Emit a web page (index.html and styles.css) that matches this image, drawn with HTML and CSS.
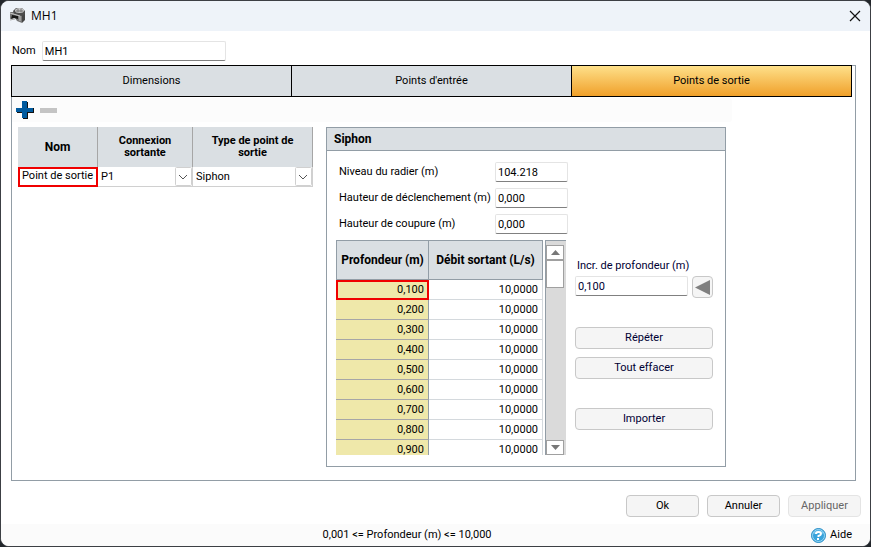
FILE: index.html
```html
<!DOCTYPE html>
<html lang="fr">

<head>
  <meta charset="UTF-8">
  <meta name="viewport" content="width=device-width, initial-scale=1.0">
  <title>MH1</title>
  <link rel="stylesheet" href="styles.css">
</head>

<body>
  <div class="window">
    <header class="titlebar">
      <svg class="app-icon" width="18" height="18" viewBox="0 0 18 18">
        <path d="M1 5 L5 5 L13 8 L13 16 L8 14 L6 11 L1 12 Z" fill="#777" />
        <path d="M13 8 L16 6 L16 13 L13 16 Z" fill="#444" />
        <path d="M4 4 L7 1 L13 1 L16 4 L16 7 L13 9 L5 7 Z" fill="#4c4c4c" />
        <ellipse cx="10.500" cy="3.500" rx="4.500" ry="2.500" fill="#c4c4c4" />
        <path d="M7 4 H14 M9 2 V5 M12 2 V5" stroke="#777" stroke-width="1" />
        <path d="M3 8 L9 9 L9 12 L5 11 L2 12 Z" fill="#161616" />
        <path d="M1 6 L11 9 L11 14" fill="none" stroke="#c4c4c4" stroke-width="1" />
        <path d="M1 13 L6 12" stroke="#aaa" stroke-width="1" />
      </svg>
      <h1>MH1</h1>
      <button class="close" aria-label="Fermer">
        <svg width="12" height="12" viewBox="0 0 12 12">
          <path d="M1 1 L11 11 M11 1 L1 11" stroke="#111" stroke-width="1.2" />
        </svg>
      </button>
    </header>

    <main>
      <div class="name-row">
        <label for="name">Nom</label>
        <input type="text" id="name" value="MH1">
      </div>

      <div class="tab-box">
        <nav class="tabs">
          <button>Dimensions</button>
          <button>Points d'entrée</button>
          <button class="active">Points de sortie</button>
        </nav>

        <div class="toolbar">
          <button aria-label="Ajouter">
            <svg width="18" height="18" viewBox="0 0 18 18">
              <path d="M7 1 H12 V7 H18 V12 H12 V18 H7 V12 H1 V7 H7 Z" fill="#111" />
              <path d="M6 0 H11 V7 H17 V11 H11 V17 H6 V11 H0 V7 H6 Z" fill="#005a9e" />
            </svg>
          </button>
          <button aria-label="Supprimer" disabled>
            <svg width="18" height="18" viewBox="0 0 18 18">
              <rect x="0" y="7" width="17" height="5" fill="#c4c4c4" />
            </svg>
          </button>
        </div>

        <div class="content">
          <table class="outlets">
            <thead>
              <tr>
                <th class="col-name">Nom</th>
                <th class="col-link">Connexion sortante</th>
                <th>Type de point de sortie</th>
              </tr>
            </thead>
            <tbody>
              <tr>
                <td class="selected">Point de sortie</td>
                <td>
                  <div class="select-cell">
                    <select aria-label="Connexion sortante">
                      <option>P1</option>
                    </select>
                    <svg width="17" height="19" viewBox="0 0 17 19">
                      <rect x="0.5" y="0.5" width="16" height="18" rx="1" fill="#fff" stroke="#d0d0d0" />
                      <path d="M4 8 L8 12 L12 8" fill="none" stroke="#555" />
                    </svg>
                  </div>
                </td>
                <td>
                  <div class="select-cell">
                    <select aria-label="Type de point de sortie">
                      <option>Siphon</option>
                    </select>
                    <svg width="17" height="19" viewBox="0 0 17 19">
                      <rect x="0.5" y="0.5" width="16" height="18" rx="1" fill="#fff" stroke="#d0d0d0" />
                      <path d="M4 8 L8 12 L12 8" fill="none" stroke="#555" />
                    </svg>
                  </div>
                </td>
              </tr>
            </tbody>
          </table>

          <section class="panel">
            <h2>Siphon</h2>
            <div class="fields">
              <label for="invert">Niveau du radier (m)</label>
              <input type="text" id="invert" value="104.218">
              <label for="start">Hauteur de déclenchement (m)</label>
              <input type="text" id="start" value="0,000">
              <label for="stop">Hauteur de coupure (m)</label>
              <input type="text" id="stop" value="0,000">
            </div>

            <div class="panel-body">
              <div class="curve">
                <div class="curve-view">
                  <table>
                    <thead>
                      <tr>
                        <th class="col-depth">Profondeur (m)</th>
                        <th>Débit sortant (L/s)</th>
                      </tr>
                    </thead>
                    <tbody>
                      <tr><td class="depth selected">0,100</td><td>10,0000</td></tr>
                      <tr><td class="depth">0,200</td><td>10,0000</td></tr>
                      <tr><td class="depth">0,300</td><td>10,0000</td></tr>
                      <tr><td class="depth">0,400</td><td>10,0000</td></tr>
                      <tr><td class="depth">0,500</td><td>10,0000</td></tr>
                      <tr><td class="depth">0,600</td><td>10,0000</td></tr>
                      <tr><td class="depth">0,700</td><td>10,0000</td></tr>
                      <tr><td class="depth">0,800</td><td>10,0000</td></tr>
                      <tr><td class="depth">0,900</td><td>10,0000</td></tr>
                    </tbody>
                  </table>
                </div>
                <div class="scrollbar">
                  <button aria-label="Monter">
                    <svg width="9" height="5" viewBox="0 0 9 5"><path d="M0 5 L4.500 0 L9 5 Z" fill="#777" /></svg>
                  </button>
                  <div class="thumb"></div>
                  <button class="down" aria-label="Descendre">
                    <svg width="9" height="5" viewBox="0 0 9 5"><path d="M0 0 L4.500 5 L9 0 Z" fill="#777" /></svg>
                  </button>
                </div>
              </div>

              <div class="actions">
                <label for="step">Incr. de profondeur (m)</label>
                <div class="step-row">
                  <input type="text" id="step" value="0,100">
                  <button aria-label="Appliquer l'incrément">
                    <svg width="15" height="15" viewBox="0 0 15 15"><path d="M15 0 V15 L0 7.500 Z" fill="#808080" /></svg>
                  </button>
                </div>
                <button>Répéter</button>
                <button>Tout effacer</button>
                <button class="import">Importer</button>
              </div>
            </div>
          </section>
        </div>
      </div>

      <div class="dialog-buttons">
        <button>Ok</button>
        <button>Annuler</button>
        <button disabled>Appliquer</button>
      </div>
    </main>

    <footer class="status">
      <span class="hint">0,001 &lt;= Profondeur (m) &lt;= 10,000</span>
      <a href="#">
        <svg width="15" height="15" viewBox="0 0 15 15">
          <circle cx="7.500" cy="7.500" r="7" fill="#38a3dc" stroke="#2b8fc6" />
          <circle cx="7.500" cy="7.500" r="6" fill="none" stroke="#9ad6f2" />
          <path d="M2 6 A6 6 0 0 1 13 6 Q8 4 2 6" fill="#7cc8ee" />
          <path d="M5 6 Q5 4 7.500 4 Q10 4 10 6 Q10 7 7.500 8 V9" fill="none" stroke="#fff" stroke-width="2" />
          <rect x="6" y="10" width="2" height="2" fill="#fff" />
        </svg>
        Aide
      </a>
    </footer>
  </div>
</body>

</html>
```

FILE: styles.css
```css
* {
  box-sizing: border-box;
}

body {
  margin: 0;
  background-color: #22262b;
  font-family: Roboto, "Liberation Sans", sans-serif;
  font-size: 11px;
  line-height: 14px;
  color: #000;
}

.window {
  display: flex;
  flex-direction: column;
  min-height: 100vh;
  border: 1px solid #3c3f44;
  border-radius: 9px;
  background-color: #fff;
  overflow: hidden;
}

.titlebar {
  display: flex;
  align-items: center;
  gap: 4px;
  height: 30px;
  padding: 0 9px 0 8px;
  background-color: #eef3f9;
}

h1 {
  flex: 1;
  margin: 0;
  font-family: "Open Sans", sans-serif;
  font-size: 12px;
  font-weight: normal;
}

button,
input,
select {
  font: inherit;
  color: inherit;
}

button {
  display: flex;
  align-items: center;
  justify-content: center;
  height: 22px;
  padding: 0;
  border: 1px solid #c8c8c8;
  border-radius: 4px;
  background-color: #f5f5f5;
}

button:disabled {
  border-color: #e4e4e4;
  color: #666;
}

.close,
.toolbar button {
  border: none;
  background: none;
}

input {
  min-width: 0;
  height: 20px;
  padding: 0 2px;
  border: 1px solid #e4e4e4;
  border-bottom-color: #808080;
  border-radius: 2px;
  background-color: #fff;
}

main {
  flex: 1;
  display: flex;
  flex-direction: column;
  padding: 10px 9px 7px 10px;
}

.name-row {
  display: flex;
  align-items: center;
  gap: 6px;
  padding-left: 1px;
}

.name-row input {
  width: 184px;
}

.tab-box {
  flex: 1;
  margin: 4px 5px 14px 0;
  border: 1px solid #929da6;
}

.tabs {
  display: flex;
  margin: -1px 3px 0 -1px;
}

.tabs button {
  flex: 1;
  height: 32px;
  border: 1px solid #000;
  border-radius: 0;
  background-color: #dadfe3;
}

.tabs button + button {
  margin-left: -1px;
}

.tabs .active {
  background: linear-gradient(#fee08a, #f0a02a);
}

.toolbar {
  display: flex;
  align-items: center;
  gap: 6px;
  width: 720px;
  max-width: 100%;
  height: 24px;
  margin-top: 1px;
  padding-left: 4px;
  border-radius: 0 3px 3px 0;
  background-color: #fcfcfc;
}

.content {
  display: flex;
  align-items: flex-start;
  gap: 13px;
  padding: 5px 129px 13px 6px;
}

table {
  width: 100%;
  border-collapse: separate;
  border-spacing: 0;
  table-layout: fixed;
}

th,
td {
  padding: 0;
}

th {
  background-color: #dadfe3;
  font-size: 12px;
  font-weight: bold;
}

.outlets {
  flex: none;
  width: 295px;
}

.outlets th {
  height: 40px;
  padding: 0 16px;
  border-right: 1px solid #a6a6a6;
  font-size: 11px;
  line-height: 12px;
}

.outlets td {
  height: 20px;
  border-right: 1px solid #d0d0d0;
  border-bottom: 1px solid #d0d0d0;
}

.outlets .col-name {
  width: 80px;
  font-size: 12px;
}

.outlets .col-link {
  width: 95px;
}

.outlets .selected {
  padding: 0 2px 3px;
  border: 2px solid #f00000;
  line-height: 13px;
  white-space: nowrap;
}

.select-cell {
  display: flex;
  align-items: center;
}

select {
  flex: 1;
  min-width: 0;
  height: 19px;
  padding: 0 3px;
  border: none;
  background: none;
  appearance: none;
}

.panel {
  flex: 1;
  min-width: 0;
  border: 1px solid #929da6;
}

h2 {
  margin: 0;
  padding: 4px 7px;
  border-bottom: 1px solid #929da6;
  background-color: #dadfe3;
  font-size: 12px;
  font-weight: bold;
}

.fields {
  display: grid;
  grid-template-columns: 150px 73px;
  gap: 6px;
  align-items: center;
  padding: 11px 11px 0 12px;
  white-space: nowrap;
}

.panel-body {
  display: flex;
  gap: 9px;
  padding: 6px 12px 11px 9px;
}

.curve {
  display: flex;
  gap: 2px;
  height: 215px;
}

.curve-view {
  width: 207px;
  overflow: hidden;
}

.curve th {
  height: 40px;
  border: 1px solid #929da6;
  border-left: none;
  white-space: nowrap;
}

.curve .col-depth {
  width: 93px;
  border-left: 1px solid #929da6;
}

.curve td {
  height: 20px;
  padding-right: 4px;
  border-right: 1px solid #d4d9dd;
  border-bottom: 1px solid #d4d9dd;
  text-align: right;
}

.curve .depth {
  border-right-color: #929da6;
  border-bottom-color: #a6a6a6;
  background-color: #efe8aa;
}

.curve .selected {
  padding-right: 3px;
  border: 2px solid #f00000;
}

.scrollbar {
  display: flex;
  flex-direction: column;
  width: 21px;
  padding: 4px 2px 0 0;
  border-top: 1px solid #929da6;
  border-left: 1px solid #929da6;
  background-color: #dadada;
}

.scrollbar button {
  height: 15px;
  border-color: #a0a0a0;
  border-radius: 0;
  background-color: #fff;
}

.scrollbar .thumb {
  height: 28px;
  border: 1px solid #a0a0a0;
  background-color: #fff;
}

.scrollbar .down {
  margin-top: auto;
}

.actions {
  flex: 1;
  display: flex;
  flex-direction: column;
  gap: 8px;
  min-width: 0;
  padding-top: 19px;
  color: #000033;
}

.actions label {
  padding-left: 2px;
}

.step-row {
  display: flex;
  gap: 4px;
  margin: -5px 0 21px;
}

.step-row input {
  flex: 1;
}

.step-row button {
  width: 21px;
}

.actions .import {
  margin-top: 21px;
}

.dialog-buttons {
  display: flex;
  justify-content: flex-end;
  gap: 8px;
}

.dialog-buttons button {
  width: 73px;
}

.status {
  display: flex;
  align-items: center;
  height: 22px;
  padding: 0 18px 0 2px;
  background-color: #fbfbfb;
}

.hint {
  flex: 1;
  text-align: center;
}

.status a {
  display: flex;
  align-items: center;
  gap: 4px;
  color: inherit;
  text-decoration: none;
}
```
